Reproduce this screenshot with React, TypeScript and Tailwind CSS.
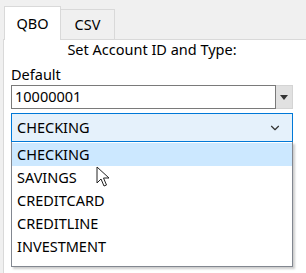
import { ChevronDown } from 'lucide-react';

const accountTypes = ['CHECKING', 'SAVINGS', 'CREDITCARD', 'CREDITLINE', 'INVESTMENT'];

export default function App() {
  return (
    <div
      className="relative w-[306px] h-[273px] overflow-hidden bg-[#f0f0f0] text-[14.5px] text-black"
      style={{ fontFamily: '"Noto Sans", "Open Sans", sans-serif' }}
    >
      {/* tab strip */}
      <div className="flex items-end h-[39px] pl-[4px]">
        <div className="relative z-10 -mb-px w-[57px] h-[34px] bg-white border border-b-0 border-[#d9d9d9] flex items-center justify-center">
          QBO
        </div>
        <div className="w-[54px] h-[30px] bg-[#f0f0f0] border border-l-0 border-b-0 border-[#d9d9d9] flex items-center justify-center">
          CSV
        </div>
      </div>

      {/* tab page */}
      <div className="ml-[3px] h-[234px] bg-white border-l border-t border-[#d9d9d9] pl-[7px] pr-[13px]">
        <div className="h-[19px] leading-[19px] text-center">Set Account ID and Type:</div>
        <div className="mt-[6px] h-[19px] leading-[19px]">Default</div>

        <div className="mt-[1px] flex h-[24px]">
          <div className="flex-1 border border-[#7a7a7a] flex items-center pl-[3px]">10000001</div>
          <div className="w-[17px] bg-[#e1e1e1] border-y border-r border-[#d4d4d4] flex items-center justify-center">
            <svg width="8" height="5" viewBox="0 0 8 5">
              <path d="M0 0 H8 L4 5 Z" fill="#333" />
            </svg>
          </div>
        </div>

        <div className="mt-[4px] h-[29px] bg-[#e5f1fb] border border-[#0078d7] flex items-center justify-between pl-[5px] pr-[10px]">
          <span>CHECKING</span>
          <ChevronDown size={14} strokeWidth={2} color="#333" />
        </div>

        <div className="h-[125px] border border-t-0 border-[#828790] bg-white shadow-[2px_2px_2px_rgba(0,0,0,0.2)] pt-[1px]">
          {accountTypes.map((t, i) => (
            <div
              key={t}
              className={
                'h-[23px] leading-[23px] pl-[5px] ' + (i === 0 ? 'bg-[#cce8ff]' : '')
              }
            >
              {t}
            </div>
          ))}
        </div>
      </div>

      {/* mouse pointer */}
      <svg className="absolute left-[96px] top-[166px]" width="14" height="22" viewBox="0 0 14 22">
        <path
          d="M1 1 L1 17 L5 13 L8 20 L10.5 19 L7.5 12 L13 12 Z"
          fill="white"
          stroke="#222"
          strokeWidth="1"
          strokeLinejoin="round"
        />
      </svg>
    </div>
  );
}
